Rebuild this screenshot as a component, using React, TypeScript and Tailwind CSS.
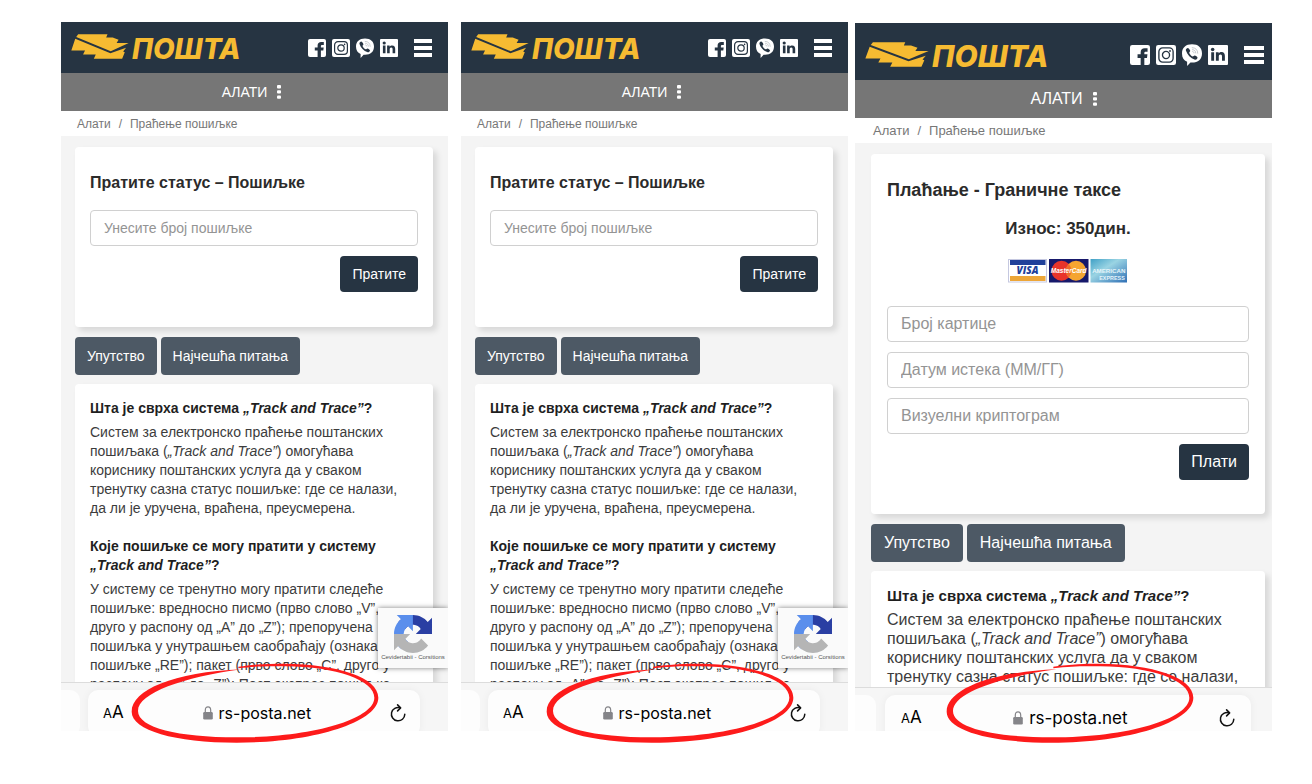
import type { ReactNode } from "react";
import clsx from "clsx";

type Size = "regular" | "wide";

function PostLogo({ size }: { size: Size }) {
  return (
    <a href="#" aria-label="Пошта" className="flex items-baseline gap-[3px] text-[#f6bb32]">
      <svg
        viewBox="60 76 178 74"
        preserveAspectRatio="none"
        fill="currentColor"
        aria-hidden="true"
        className={size === "wide" ? "h-[25px] w-[64px]" : "h-[25px] w-[58px]"}
      >
        <path d="M82 77H172L168 86H188L206 93L200 103H237L182 127L76 85Z" />
        <path d="M73 90L181 133L229 117L220 128L225 130L217 149H130L136 137H97L103 125H61Z" />
      </svg>
      <span
        className={clsx(
          "font-['Inter',sans-serif] leading-6 font-extrabold italic",
          size === "wide" ? "text-[30px]" : "text-[28px]",
        )}
      >
        ПОШТА
      </span>
    </a>
  );
}

function FacebookIcon() {
  return (
    <svg viewBox="0 0 18 18" className="size-full" aria-hidden="true">
      <rect width="18" height="18" rx="2" fill="#fff" />
      <path
        d="M9.6 18V11.6H6.8V8.4H9.6V6.6C9.6 4.2 11 3 13.2 3H15.8V6.1H14.3C13.3 6.1 12.9 6.5 12.9 7.3V8.4H15.7L15.3 11.6H12.9V18Z"
        fill="#263442"
      />
    </svg>
  );
}

function InstagramIcon() {
  return (
    <svg viewBox="0 0 18 18" className="size-full" aria-hidden="true">
      <rect width="18" height="18" rx="2" fill="#fff" />
      <rect x="2.6" y="2.6" width="12.8" height="12.8" rx="3.4" fill="none" stroke="#263442" strokeWidth="1.2" />
      <circle cx="9" cy="9" r="3.2" fill="none" stroke="#263442" strokeWidth="1.2" />
      <circle cx="12.6" cy="5.4" r=".8" fill="#263442" />
    </svg>
  );
}

function ViberIcon() {
  return (
    <svg viewBox="0 0 18 18" className="size-full overflow-visible" aria-hidden="true">
      <path
        d="M9 -.6C14.6 -.6 18 2.4 18 7.6C18 12.8 14.6 15.8 9 15.8L7.6 15.7L4.6 19V15C1.6 13.8 0 11.4 0 7.6C0 2.4 3.4 -.6 9 -.6Z"
        fill="#fff"
      />
      <path
        d="M5 2.6C4 3 3.2 3.9 3.5 5C4.8 9 7.6 11.9 11.7 13.2C12.8 13.4 13.7 12.4 14 11.4C14 10.6 12.2 9.6 11.5 9.4C10.7 9.3 10.4 10.4 9.6 10.3C8.2 9.7 7.1 8.5 6.5 7.1C6.5 6.2 7.5 6 7.4 5.2C7.1 4.3 6.1 2.6 5 2.6Z"
        fill="#263442"
      />
      <path
        d="M9.2 2.4C12.3 2.5 14.1 4.3 14.2 7.4M9.4 4.2C11.3 4.3 12.3 5.4 12.4 7.2M9.6 5.9C10.4 6 10.8 6.4 10.8 7.1"
        fill="none"
        stroke="#b4babf"
        strokeWidth=".7"
        strokeLinecap="round"
      />
    </svg>
  );
}

function LinkedinIcon() {
  return (
    <svg viewBox="0 0 18 18" className="size-full" aria-hidden="true">
      <rect width="18" height="18" rx="1" fill="#fff" />
      <circle cx="4.2" cy="4" r="1.6" fill="#263442" />
      <path
        d="M2.9 6.6H5.5V14.2H2.9ZM7.1 6.6H9.6V7.7C10.1 6.9 11 6.4 12.1 6.4C14.5 6.4 15.2 7.9 15.2 10V14.2H12.6V10.6C12.6 9.4 12.3 8.6 11.2 8.6C10.1 8.6 9.7 9.4 9.7 10.6V14.2H7.1Z"
        fill="#263442"
      />
    </svg>
  );
}

const socials = [
  { name: "Facebook", icon: <FacebookIcon /> },
  { name: "Instagram", icon: <InstagramIcon /> },
  { name: "Viber", icon: <ViberIcon /> },
  { name: "LinkedIn", icon: <LinkedinIcon /> },
];

function SiteHeader({ size }: { size: Size }) {
  const wide = size === "wide";
  return (
    <header>
      <div
        className={clsx(
          "flex items-center justify-between bg-[#263442]",
          wide ? "h-[57px] pt-[7px] pr-2 pl-[10px]" : "h-[51px] pr-4 pl-[10px]",
        )}
      >
        <PostLogo size={size} />
        <div className="flex items-center gap-4">
          <ul className="flex gap-1.5">
            {socials.map((s) => (
              <li key={s.name}>
                <a href="#" aria-label={s.name} className={clsx("block", wide ? "size-5" : "size-[18px]")}>
                  {s.icon}
                </a>
              </li>
            ))}
          </ul>
          <button
            type="button"
            aria-label="Мени"
            className={clsx("flex h-[18px] flex-col justify-between", wide ? "w-5" : "w-[18px]")}
          >
            <span className="h-1 w-full bg-white" />
            <span className="h-1 w-full bg-white" />
            <span className="h-1 w-full bg-white" />
          </button>
        </div>
      </div>
      <div className={clsx("flex justify-center bg-[#767676]", wide ? "text-base" : "pr-[6px] text-sm")}>
        <button type="button" className="flex h-[38px] items-center gap-2.5 text-white">
          АЛАТИ
          <svg viewBox="0 0 4 14" className="h-[14px] w-1" fill="#fff" aria-hidden="true">
            <rect width="4" height="3.4" rx="1" />
            <rect y="5.2" width="4" height="3.4" rx="1" />
            <rect y="10.4" width="4" height="3.4" rx="1" />
          </svg>
        </button>
      </div>
      <nav
        aria-label="Путања"
        className={clsx(
          "flex h-[25px] items-center gap-2 bg-white text-[#777]",
          wide ? "pl-[18px] text-[13px]" : "pl-4 text-xs",
        )}
      >
        <a href="#">Алати</a>
        <span>/</span>
        <a href="#">Праћење пошиљке</a>
      </nav>
    </header>
  );
}

function Field({ label }: { label: string }) {
  return (
    <input
      type="text"
      aria-label={label}
      placeholder={label}
      className="block h-9 w-full rounded-[4px] border border-[#d0d0d0] bg-white px-[13px] text-[#333] placeholder:text-[#949494]"
    />
  );
}

function SubmitButton({ children }: { children: ReactNode }) {
  return (
    <button type="submit" className="h-9 self-end rounded-[4px] bg-[#263442] px-3 text-white">
      {children}
    </button>
  );
}

function TrackForm() {
  return (
    <form onSubmit={(e) => e.preventDefault()} className="flex flex-col gap-2.5 pt-[26px] pb-[35px]">
      <h1 className="mb-[7px] text-base leading-5 font-bold text-[#2b2b2b]">Пратите статус – Пошиљке</h1>
      <Field label="Унесите број пошиљке" />
      <SubmitButton>Пратите</SubmitButton>
    </form>
  );
}

function CardLogos() {
  return (
    <svg viewBox="0 0 120 24" className="mb-[13px] h-6 w-[120px] self-center" role="img" aria-label="Visa, MasterCard, American Express">
      <rect x=".5" y=".5" width="38" height="22.5" fill="#fff" stroke="#c5c8e0" />
      <rect x="2" y="1" width="35.5" height="5" fill="#20409a" />
      <rect x="2" y="17" width="35.5" height="5" fill="#eda637" />
      <text x="19.5" y="15.2" textAnchor="middle" fontSize="10" fontWeight="800" fontStyle="italic" fill="#20409a" fontFamily="Open Sans, sans-serif">
        VISA
      </text>
      <rect x="41" y="0" width="39.5" height="23.5" fill="#17196b" />
      <circle cx="53.5" cy="11.8" r="10" fill="#e8342b" />
      <circle cx="68" cy="11.8" r="10" fill="#f5a531" />
      <path d="M60.7 4.9A10 10 0 0 1 60.7 18.7A10 10 0 0 1 60.7 4.9Z" fill="#ef6b2c" />
      <text x="60.7" y="14.2" textAnchor="middle" fontSize="6.5" fontWeight="700" fontStyle="italic" fill="#fff" fontFamily="Liberation Sans, sans-serif">
        MasterCard
      </text>
      <defs>
        <linearGradient id="amex" x1="0" y1="0" x2="1" y2="1">
          <stop offset="0" stopColor="#3fa0c6" />
          <stop offset=".4" stopColor="#9ad4e3" />
          <stop offset="1" stopColor="#2f6fb5" />
        </linearGradient>
      </defs>
      <rect x="82.5" y="0" width="36.5" height="23.5" fill="url(#amex)" />
      <text x="100.8" y="14" textAnchor="middle" fontSize="6.2" fontWeight="700" fill="#e4f4fa" fontFamily="Liberation Sans, sans-serif">
        AMERICAN
      </text>
      <text x="104" y="20.5" textAnchor="middle" fontSize="5.4" fontWeight="700" fill="#e4f4fa" fontFamily="Liberation Sans, sans-serif">
        EXPRESS
      </text>
    </svg>
  );
}

function PaymentForm() {
  return (
    <form onSubmit={(e) => e.preventDefault()} className="flex flex-col gap-2.5 pt-[26px] pb-[34px]">
      <h1 className="text-lg leading-5 font-bold text-[#2b2b2b]">Плаћање - Граничне таксе</h1>
      <p className="mt-[9px] mb-2.5 self-center text-[17px] leading-5 font-bold text-[#2b2b2b]">
        Износ: 350дин.
      </p>
      <CardLogos />
      <Field label="Број картице" />
      <Field label="Датум истека (ММ/ГГ)" />
      <Field label="Визуелни криптограм" />
      <SubmitButton>Плати</SubmitButton>
    </form>
  );
}

function Card({ size, children }: { size: Size; children: ReactNode }) {
  return (
    <section
      className={clsx(
        "rounded-[4px] bg-white shadow-[4px_4px_6px_rgba(0,0,0,0.12)]",
        size === "wide" ? "px-4" : "px-[15px]",
      )}
    >
      {children}
    </section>
  );
}

function Faq({ size }: { size: Size }) {
  const wide = size === "wide";
  const heading = clsx("font-bold text-[#1f1f1f]", wide && "text-[15px] leading-[19px]");
  return (
    <div className={clsx("pt-[15px] leading-[19px] text-[#3c3c3c]", !wide && "pr-2")}>
      <h2 className={heading}>
        Шта је сврха система <em>„Track and Trace”</em>?
      </h2>
      <p className="mt-[5px]">
        Систем за електронско праћење поштанских пошиљака (<em>„Track and Trace”</em>) омогућава кориснику
        поштанских услуга да у сваком тренутку сазна статус пошиљке: где се налази, да ли је уручена, враћена,
        преусмерена.
      </p>
      {!wide && (
        <>
          <h2 className={clsx("mt-[19px]", heading)}>
            Које пошиљке се могу пратити у систему <em>„Track and Trace”</em>?
          </h2>
          <p className="mt-[5px]">
            У систему се тренутно могу пратити следеће пошиљке: вредносно писмо (прво слово „V”, друго у распону
            од „A” до „Z”); препоручена пошиљка у унутрашњем саобраћају (ознака пошиљке „RE”); пакет (прво слово
            „C”, друго у распону од „A” до „Z”); Пост експрес пошиљке
          </p>
        </>
      )}
    </div>
  );
}

function CaptchaBadge() {
  return (
    <div className="absolute right-0 bottom-[14px] flex h-[60px] w-[70px] flex-col items-center overflow-hidden bg-[#fafafa] pt-[7px] shadow-[0_0_5px_rgba(0,0,0,0.5)]">
      <svg viewBox="0 0 64 64" className="size-[38px]" aria-hidden="true">
        <path
          d="M64 31.955l-.033-1.37V4.687l-7.16 7.16C50.948 4.674 42.033.093 32.05.093c-10.4 0-19.622 4.96-25.458 12.64l11.736 11.86a15.55 15.55 0 0 1 4.754-5.334c2.05-1.6 4.952-2.906 8.968-2.906.485 0 .86.057 1.135.163 4.976.393 9.288 3.14 11.828 7.124l-8.307 8.307L64 31.953"
          fill="#2a3fa3"
        />
        <path
          d="M31.862.094l-1.37.033H4.594l7.16 7.16C4.58 13.147 0 22.06 0 32.046c0 10.4 4.96 19.622 12.64 25.458L24.5 45.768a15.55 15.55 0 0 1-5.334-4.754c-1.6-2.05-2.906-4.952-2.906-8.968 0-.485.057-.86.163-1.135.393-4.976 3.14-9.288 7.124-11.828l8.307 8.307L31.86.095"
          fill="#5a8eec"
        />
        <path
          d="M.001 32.045l.033 1.37v25.898l7.16-7.16c5.86 7.173 14.774 11.754 24.76 11.754 10.4 0 19.622-4.96 25.458-12.64l-11.736-11.86a15.55 15.55 0 0 1-4.754 5.334c-2.05 1.6-4.952 2.906-8.968 2.906-.485 0-.86-.057-1.135-.163-4.976-.393-9.288-3.14-11.828-7.124l8.307-8.307-27.298.006"
          fill="#b5b5b5"
        />
      </svg>
      <span className="text-[6px] leading-[8px] whitespace-nowrap text-[#555]">Cevidertabii - Corsitions</span>
    </div>
  );
}

function LockIcon() {
  return (
    <svg viewBox="0 0 10 14" className="h-[14px] w-2.5" aria-hidden="true">
      <path d="M2.3 7V4.2C2.3 2 3.4 .9 5 .9S7.7 2 7.7 4.2V7" fill="none" stroke="#858589" strokeWidth="1.2" />
      <rect x=".2" y="6" width="9.6" height="7.6" rx="1.3" fill="#858589" />
    </svg>
  );
}

function ReloadIcon() {
  return (
    <svg viewBox="0 0 16 18" className="h-[18px] w-4" fill="none" stroke="#111" strokeWidth="1.5" strokeLinecap="round" strokeLinejoin="round" aria-hidden="true">
      <path d="M10.2 3.8A6.7 6.7 0 1 0 14.8 10.3" />
      <path d="M7.6 .9L10.6 3.9L7.6 6.9" />
    </svg>
  );
}

function AddressBar({ size }: { size: Size }) {
  const wide = size === "wide";
  return (
    <footer
      className={clsx(
        "relative flex shrink-0 overflow-hidden border-t border-[#dcdcdc] bg-[#f6f6f6] pt-[7px] font-['Inter',sans-serif] text-black",
        wide ? "h-[44px] gap-[9px] pr-[21px]" : "h-[49px] gap-2 pr-7",
      )}
    >
      <div className={clsx("h-[46px] rounded-r-[10px] bg-[#fdfdfd]", wide ? "w-[21px]" : "w-[19px]")} />
      <div
        className={clsx(
          "flex h-[46px] flex-1 items-center justify-between rounded-[10px] bg-[#fdfdfd] shadow-[0_0_8px_rgba(0,0,0,0.05)]",
          wide ? "px-4" : "pr-[14px] pl-[15px]",
        )}
      >
        <button type="button" aria-label="Величина текста" className="flex items-baseline">
          <span className="text-[13px]">A</span>
          <span className="text-[17px]">A</span>
        </button>
        <a
          href="#"
          className={clsx("flex items-center gap-1.5 leading-6", wide ? "text-[17px]" : "text-base")}
        >
          <LockIcon />
          rs-posta.net
        </a>
        <button type="button" aria-label="Освежи">
          <ReloadIcon />
        </button>
      </div>
    </footer>
  );
}

function RedCircle({ className }: { className: string }) {
  return (
    <svg
      viewBox="240 485 750 246"
      fill="#fd1b1b"
      aria-hidden="true"
      className={clsx("pointer-events-none absolute bottom-[-13px] h-[82px] w-[250px]", className)}
    >
      <path d="M565 499C620 491 660 490 705 490C860 492 985 530 985 592C985 665 790 727 560 727C375 727 245 690 245 634C245 570 370 515 575 507C400 531 264 578 264 632C264 682 385 711 560 711C790 711 973 655 973 592C973 540 860 499 705 498C660 497 620 497 565 504Z" />
    </svg>
  );
}

interface PhoneProps {
  size: Size;
  className: string;
  circleClass: string;
  form: ReactNode;
  captcha?: boolean;
}

function Phone({ size, className, circleClass, form, captcha }: PhoneProps) {
  const wide = size === "wide";
  const tab = clsx("h-[38px] rounded-[4px] bg-[#4d5965]", wide ? "px-[13px]" : "px-3");
  return (
    <article className={clsx("relative flex min-w-0 basis-0 flex-col", className)}>
      <div
        className={clsx(
          "relative min-h-0 flex-1 overflow-hidden bg-[#f4f4f4]",
          wide ? "text-base" : "text-sm",
        )}
      >
        <SiteHeader size={size} />
        <div className={clsx("flex flex-col pt-[11px]", wide ? "pr-[7px] pl-4" : "pr-[15px] pl-[14px]")}>
          <Card size={size}>{form}</Card>
          <div className="mt-2.5 mb-[9px] flex gap-1 text-white">
            <button type="button" className={tab}>
              Упутство
            </button>
            <button type="button" className={tab}>
              Најчешћа питања
            </button>
          </div>
          <Card size={size}>
            <Faq size={size} />
          </Card>
        </div>
        {captcha && <CaptchaBadge />}
      </div>
      <AddressBar size={size} />
      <RedCircle className={circleClass} />
    </article>
  );
}

export default function App() {
  return (
    <main className="flex h-screen overflow-hidden bg-white pt-[22px] pr-10 pb-[53px] pl-[61px] font-['Liberation_Sans',Arial,sans-serif]">
      <Phone size="regular" className="grow-[387]" circleClass="left-[69px]" form={<TrackForm />} captcha />
      <Phone size="regular" className="ml-[13px] grow-[387]" circleClass="left-[84px]" form={<TrackForm />} captcha />
      <Phone size="wide" className="mt-px ml-[7px] grow-[417]" circleClass="left-[90px]" form={<PaymentForm />} />
    </main>
  );
}
